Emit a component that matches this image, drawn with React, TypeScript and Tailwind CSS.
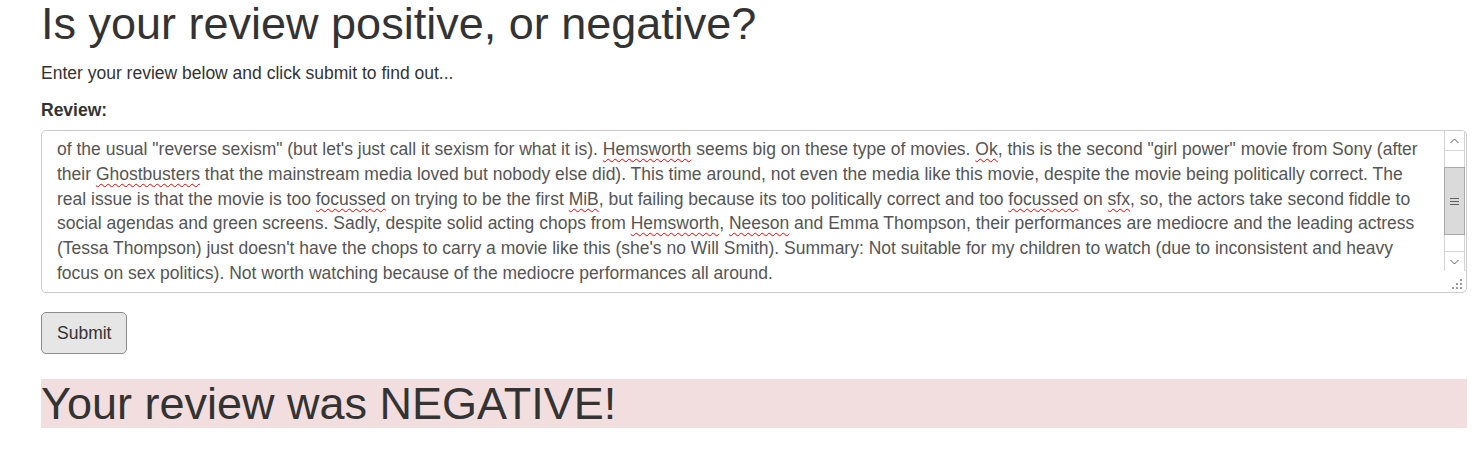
import React from "react";

const Typo = ({ children }: { children: React.ReactNode }) => (
  <span className="underline decoration-wavy decoration-[#e00] decoration-1 underline-offset-[3px]">
    {children}
  </span>
);

const lines: React.ReactNode[] = [
  <>
    of the usual "reverse sexism" (but let's just call it sexism for what it is). <Typo>Hemsworth</Typo> seems big on
    these type of movies. <Typo>Ok</Typo>, this is the second "girl power" movie from Sony (after
  </>,
  <>
    their <Typo>Ghostbusters</Typo> that the mainstream media loved but nobody else did). This time around, not even the
    media like this movie, despite the movie being politically correct. The
  </>,
  <>
    real issue is that the movie is too <Typo>focussed</Typo> on trying to be the first <Typo>MiB</Typo>, but failing
    because its too politically correct and too <Typo>focussed</Typo> on <Typo>sfx</Typo>, so, the actors take second
    fiddle to
  </>,
  <>
    social agendas and green screens. Sadly, despite solid acting chops from <Typo>Hemsworth</Typo>,{" "}
    <Typo>Neeson</Typo> and Emma Thompson, their performances are mediocre and the leading actress
  </>,
  <>
    (Tessa Thompson) just doesn't have the chops to carry a movie like this (she's no Will Smith). Summary: Not
    suitable for my children to watch (due to inconsistent and heavy
  </>,
  <>focus on sex politics). Not worth watching because of the mediocre performances all around.</>,
];

// classic scrollbar + resize grip drawn next to the text
const Scrollbar = () => (
  <div className="mr-[1px] flex w-[21px] flex-col">
    <div className="flex h-[140px] flex-col border-x border-[#d4d4d4] bg-white">
      <div className="flex h-[20px] items-center justify-center border-b border-[#d4d4d4]">
        <svg width="9" height="6" viewBox="0 0 9 6">
          <path d="M0.5 5 L4.5 1 L8.5 5" fill="none" stroke="#606060" strokeWidth="1" />
        </svg>
      </div>
      <div className="h-[16px]" />
      <div className="-mx-[1px] flex h-[68px] items-center justify-center border border-[#a8a8a8] bg-[#dadada]">
        <svg width="9" height="7" viewBox="0 0 9 7">
          <path d="M0 0.5 H9 M0 3.5 H9 M0 6.5 H9" stroke="#606060" strokeWidth="1" />
        </svg>
      </div>
      <div className="flex-1" />
      <div className="flex h-[20px] items-center justify-center border-t border-[#d4d4d4]">
        <svg width="9" height="6" viewBox="0 0 9 6">
          <path d="M0.5 1 L4.5 5 L8.5 1" fill="none" stroke="#606060" strokeWidth="1" />
        </svg>
      </div>
    </div>
    <div className="flex flex-1 items-end justify-end pb-[2px] pr-[2px]">
      <svg width="11" height="11" viewBox="0 0 11 11">
        <g fill="#9a9a9a">
          <rect x="8" y="0" width="2" height="2" />
          <rect x="4" y="4" width="2" height="2" />
          <rect x="8" y="4" width="2" height="2" />
          <rect x="0" y="8" width="2" height="2" />
          <rect x="4" y="8" width="2" height="2" />
          <rect x="8" y="8" width="2" height="2" />
        </g>
      </svg>
    </div>
  </div>
);

export default function App() {
  return (
    <div className="min-h-screen bg-white pl-[41px] pr-[17px] text-[#333] [font-family:'Liberation_Sans',Arial,sans-serif]">
      <h1 className="text-[45px] leading-[47px]">Is your review positive, or negative?</h1>
      <p className="mt-[14px] text-[17.5px] leading-[25px]">Enter your review below and click submit to find out...</p>

      <div className="mt-[12px]">
        <label className="block text-[17.5px] font-bold leading-[25px]">Review:</label>
        <div className="mt-[7px] flex h-[163px] overflow-hidden rounded-[5px] border border-[#ccc] bg-white">
          <div className="flex-1 overflow-hidden pl-[15px] pt-[6px] text-[17.5px] leading-[24.8px] text-[#555]">
            {lines.map((l, i) => (
              <div key={i} className="whitespace-nowrap">
                {l}
              </div>
            ))}
          </div>
          <Scrollbar />
        </div>
      </div>

      <button className="mt-[19px] h-[42px] rounded-[5px] border border-[#8c8c8c] bg-[#e6e6e6] px-[15px] text-[17.5px] text-[#333]">
        Submit
      </button>

      <div className="mt-[25px] h-[49px] bg-[#f2dede]">
        <h2 className="text-[45px] leading-[49px]">Your review was NEGATIVE!</h2>
      </div>
    </div>
  );
}
